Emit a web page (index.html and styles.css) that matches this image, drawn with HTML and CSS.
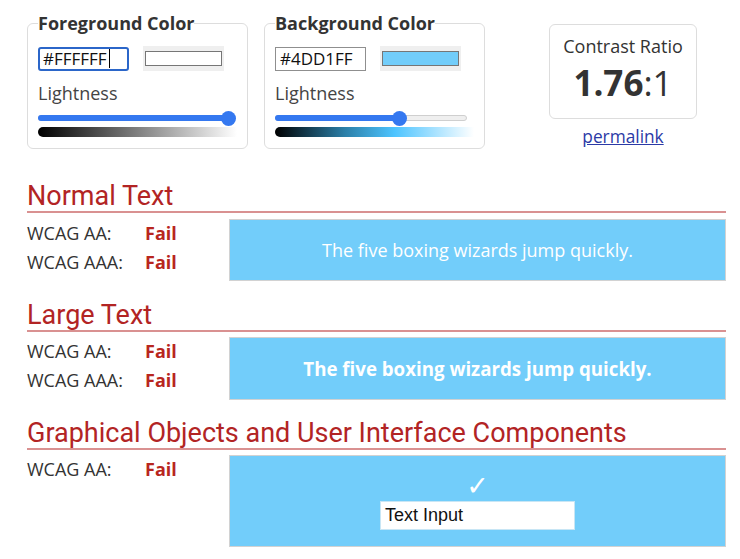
FILE: index.html
```html
<!DOCTYPE html>
<html lang="en">

<head>
    <meta charset="UTF-8">
    <meta name="viewport" content="width=device-width, initial-scale=1.0">
    <title>Contrast Checker</title>
    <link rel="stylesheet" href="styles.css">
</head>

<body>
    <div class="page">
        <div class="pickers">
            <fieldset class="picker">
                <legend>Foreground Color</legend>
                <div class="picker-row">
                    <div class="hex-input focused">#FFFFFF<span class="caret"></span></div>
                    <div class="swatch"><span class="swatch-color fg-color"></span></div>
                </div>
                <div class="picker-label">Lightness</div>
                <div class="slider">
                    <div class="slider-fill" style="width: 100%"></div>
                    <div class="slider-thumb" style="left: 100%"></div>
                </div>
                <div class="gradient fg-gradient"></div>
            </fieldset>

            <fieldset class="picker">
                <legend>Background Color</legend>
                <div class="picker-row">
                    <div class="hex-input">#4DD1FF</div>
                    <div class="swatch"><span class="swatch-color bg-color"></span></div>
                </div>
                <div class="picker-label">Lightness</div>
                <div class="slider">
                    <div class="slider-fill" style="width: 65%"></div>
                    <div class="slider-thumb" style="left: 65%"></div>
                </div>
                <div class="gradient bg-gradient"></div>
            </fieldset>

            <div class="ratio">
                <div class="ratio-box">
                    <div class="ratio-title">Contrast Ratio</div>
                    <div class="ratio-value"><b>1.76</b>:1</div>
                </div>
                <a class="permalink" href="#">permalink</a>
            </div>
        </div>

        <section class="result normal">
            <h2>Normal Text</h2>
            <div class="result-body">
                <div class="checks">
                    <div class="check"><span class="level">WCAG AA:</span><span class="fail">Fail</span></div>
                    <div class="check"><span class="level">WCAG AAA:</span><span class="fail">Fail</span></div>
                </div>
                <div class="sample normal-sample">The five boxing wizards jump quickly.</div>
            </div>
        </section>

        <section class="result large">
            <h2>Large Text</h2>
            <div class="result-body">
                <div class="checks">
                    <div class="check"><span class="level">WCAG AA:</span><span class="fail">Fail</span></div>
                    <div class="check"><span class="level">WCAG AAA:</span><span class="fail">Fail</span></div>
                </div>
                <div class="sample large-sample">The five boxing wizards jump quickly.</div>
            </div>
        </section>

        <section class="result graphical">
            <h2>Graphical Objects and User Interface Components</h2>
            <div class="result-body">
                <div class="checks">
                    <div class="check"><span class="level">WCAG AA:</span><span class="fail">Fail</span></div>
                </div>
                <div class="sample ui-sample">
                    <span class="tick">&#10003;</span>
                    <div class="text-input">Text Input</div>
                </div>
            </div>
        </section>
    </div>
</body>

</html>
```

FILE: styles.css
```css
* {
    box-sizing: border-box;
}

body {
    margin: 0;
    font-family: "Open Sans", sans-serif;
    color: #333;
    background: #fff;
}

.page {
    width: 699px;
    margin-left: 27px;
}

/* pickers */
.pickers {
    display: flex;
    align-items: flex-start;
}

.picker {
    width: 221px;
    margin: 12px 16px 0 0;
    padding: 11px 10px 11px 10px;
    border: 1px solid #ddd;
    border-radius: 6px;
}

.picker legend {
    padding: 0;
    font-size: 18px;
    font-weight: bold;
    line-height: 23px;
    color: #333;
}

.picker-row {
    display: flex;
    align-items: center;
    gap: 14px;
}

.hex-input {
    width: 91px;
    height: 24px;
    padding: 0 4px;
    border: 1px solid #8f8f8f;
    font-size: 17px;
    line-height: 22px;
    color: #111;
    display: flex;
    align-items: center;
}

.hex-input.focused {
    border: 2px solid #2b66c9;
    border-radius: 3px;
    padding: 0 3px;
}

.caret {
    display: inline-block;
    width: 1px;
    height: 19px;
    margin-left: 2px;
    background: #000;
}

.swatch {
    width: 81px;
    height: 25px;
    padding: 5px 2px;
    background: #efefef;
}

.swatch-color {
    display: block;
    height: 15px;
    border: 1px solid #767676;
}

.fg-color {
    background: #fff;
}

.bg-color {
    background: #72cdfa;
}

.picker-label {
    margin-top: 9px;
    font-size: 18px;
    line-height: 26px;
    color: #444;
}

.slider {
    position: relative;
    height: 6px;
    margin: 9px 7px 0 0;
    border: 1px solid #cfcfcf;
    border-radius: 3px;
    background: #efefef;
}

.slider-fill {
    margin: -1px 0 0 -1px;
    height: 6px;
    border-radius: 3px;
    background: #3478f0;
}

.slider-thumb {
    position: absolute;
    top: 50%;
    width: 15px;
    height: 15px;
    margin: -7.5px 0 0 -8px;
    border-radius: 50%;
    background: #3478f0;
}

.gradient {
    height: 10px;
    margin-top: 6px;
    border-radius: 5px 0 0 5px;
}

.fg-gradient {
    background: linear-gradient(to right, #000, #fff);
}

.bg-gradient {
    background: linear-gradient(to right, #000, #2b7fa8 35%, #4dc4ff 60%, #fff);
}

/* ratio */
.ratio {
    width: 148px;
    margin: 24px 0 0 48px;
    text-align: center;
}

.ratio-box {
    padding: 9px 0 13px;
    border: 1px solid #ddd;
    border-radius: 6px;
}

.ratio-title {
    font-size: 18px;
    line-height: 24px;
}

.ratio-value {
    margin-top: 3px;
    font-size: 35px;
    line-height: 44px;
}

.permalink {
    display: inline-block;
    margin-top: 7px;
    font-size: 17.3px;
    line-height: 22px;
    color: #2b3aa6;
}

/* results */
.result h2 {
    margin: 0;
    font-family: Roboto, sans-serif;
    font-size: 27px;
    font-weight: normal;
    line-height: 30px;
    color: #b22424;
    border-bottom: 2px solid #d99191;
}

.normal h2 {
    margin-top: 32px;
}

.large h2 {
    margin-top: 19px;
}

.graphical h2 {
    margin-top: 18px;
}

.result-body {
    display: flex;
    align-items: flex-start;
    margin-top: 6px;
}

.large .result-body,
.graphical .result-body {
    margin-top: 5px;
}

.checks {
    width: 202px;
    flex-shrink: 0;
}

.check {
    display: flex;
    font-size: 18px;
    line-height: 29px;
}

.level {
    width: 118px;
}

.fail {
    font-weight: bold;
    color: #b8261e;
}

.sample {
    flex: 1;
    display: flex;
    flex-direction: column;
    align-items: center;
    justify-content: center;
    border: 1px solid #d2d2d2;
    background: #72cdfa;
    color: #fff;
}

.normal-sample {
    height: 62px;
    font-size: 18px;
}

.large-sample {
    height: 63px;
    font-size: 18.7px;
    font-weight: bold;
}

.ui-sample {
    height: 92px;
}

.tick {
    font-family: "DejaVu Sans", sans-serif;
    font-size: 27px;
    line-height: 26px;
}

.text-input {
    width: 195px;
    height: 29px;
    margin-top: 2px;
    padding: 0 4px;
    border: 1px solid #c8e6f5;
    background: #fff;
    font-family: "Liberation Sans", Arial, sans-serif;
    font-size: 18px;
    line-height: 27px;
    color: #111;
}
```
